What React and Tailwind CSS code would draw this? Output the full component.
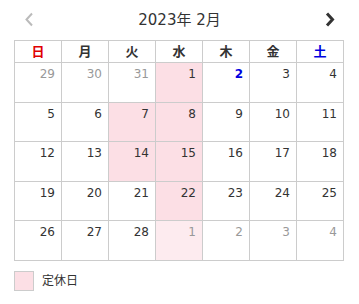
import React from 'react'

const HOLIDAY = 'bg-[#fcdfe5]'
const HOLIDAY_NEXT = 'bg-[#fdebef]'

const weekdays = [
  { label: '日', color: 'text-[#e00000]' },
  { label: '月', color: 'text-[#333]' },
  { label: '火', color: 'text-[#333]' },
  { label: '水', color: 'text-[#333]' },
  { label: '木', color: 'text-[#333]' },
  { label: '金', color: 'text-[#333]' },
  { label: '土', color: 'text-[#0000e0]' },
]

// each week: [day, type] where type: 'prev' | 'cur' | 'next'
const weeks = [
  [[29, 'prev'], [30, 'prev'], [31, 'prev'], [1, 'cur'], [2, 'cur'], [3, 'cur'], [4, 'cur']],
  [[5, 'cur'], [6, 'cur'], [7, 'cur'], [8, 'cur'], [9, 'cur'], [10, 'cur'], [11, 'cur']],
  [[12, 'cur'], [13, 'cur'], [14, 'cur'], [15, 'cur'], [16, 'cur'], [17, 'cur'], [18, 'cur']],
  [[19, 'cur'], [20, 'cur'], [21, 'cur'], [22, 'cur'], [23, 'cur'], [24, 'cur'], [25, 'cur']],
  [[26, 'cur'], [27, 'cur'], [28, 'cur'], [1, 'next'], [2, 'next'], [3, 'next'], [4, 'next']],
]

const rowHeights = ['h-[40px]', 'h-[39px]', 'h-[40px]', 'h-[39px]', 'h-[40px]']
const closed = [1, 7, 8, 14, 15, 22]

function cellBg(day, type, col) {
  if (type === 'next' && col === 3) return HOLIDAY_NEXT
  if (type === 'cur' && closed.includes(day)) return HOLIDAY
  return 'bg-white'
}

function textColor(day, type) {
  if (type !== 'cur') return 'text-[#999]'
  if (day === 2) return 'text-[#0000e0] font-bold'
  return 'text-[#333]'
}

export default function App() {
  return (
    <div className="w-[359px] h-[304px] bg-white px-[14px] font-['DejaVu_Sans','Noto_Sans_CJK_JP',sans-serif]">
      <div className="h-[40px] flex items-center justify-between px-[10px]">
        <svg width="10" height="15" viewBox="0 0 10 15" className="mb-[1px]">
          <path d="M8 1.5 L2.5 7.5 L8 13.5" fill="none" stroke="#bbb" strokeWidth="2" />
        </svg>
        <div className="text-[15px] text-[#333] pt-[1px]">2023年 2月</div>
        <svg width="10" height="15" viewBox="0 0 10 15" className="mb-[1px]">
          <path d="M2 1.5 L7.5 7.5 L2 13.5" fill="none" stroke="#333" strokeWidth="3" />
        </svg>
      </div>

      <div className="w-[330px] border-l border-t border-[#ccc]">
        <div className="flex">
          {weekdays.map((w) => (
            <div key={w.label} className={`w-[47px] h-[22px] border-r border-b border-[#ccc] flex items-center justify-center text-[13px] font-bold ${w.color}`}>
              {w.label}
            </div>
          ))}
        </div>
        {weeks.map((week, i) => (
          <div key={i} className="flex">
            {week.map(([day, type], col) => (
              <div key={col} className={`w-[47px] ${rowHeights[i]} border-r border-b border-[#ccc] ${cellBg(day, type, col)} text-right pr-[6px] pt-[2px] text-[12px] leading-[18px] ${textColor(day, type)}`}>
                {day}
              </div>
            ))}
          </div>
        ))}
      </div>

      <div className="mt-[10px] flex items-center gap-[8px]">
        <div className="w-[20px] h-[20px] border border-[#ccc] bg-[#fcdfe5]" />
        <span className="text-[12px] text-[#333]">定休日</span>
      </div>
    </div>
  )
}
